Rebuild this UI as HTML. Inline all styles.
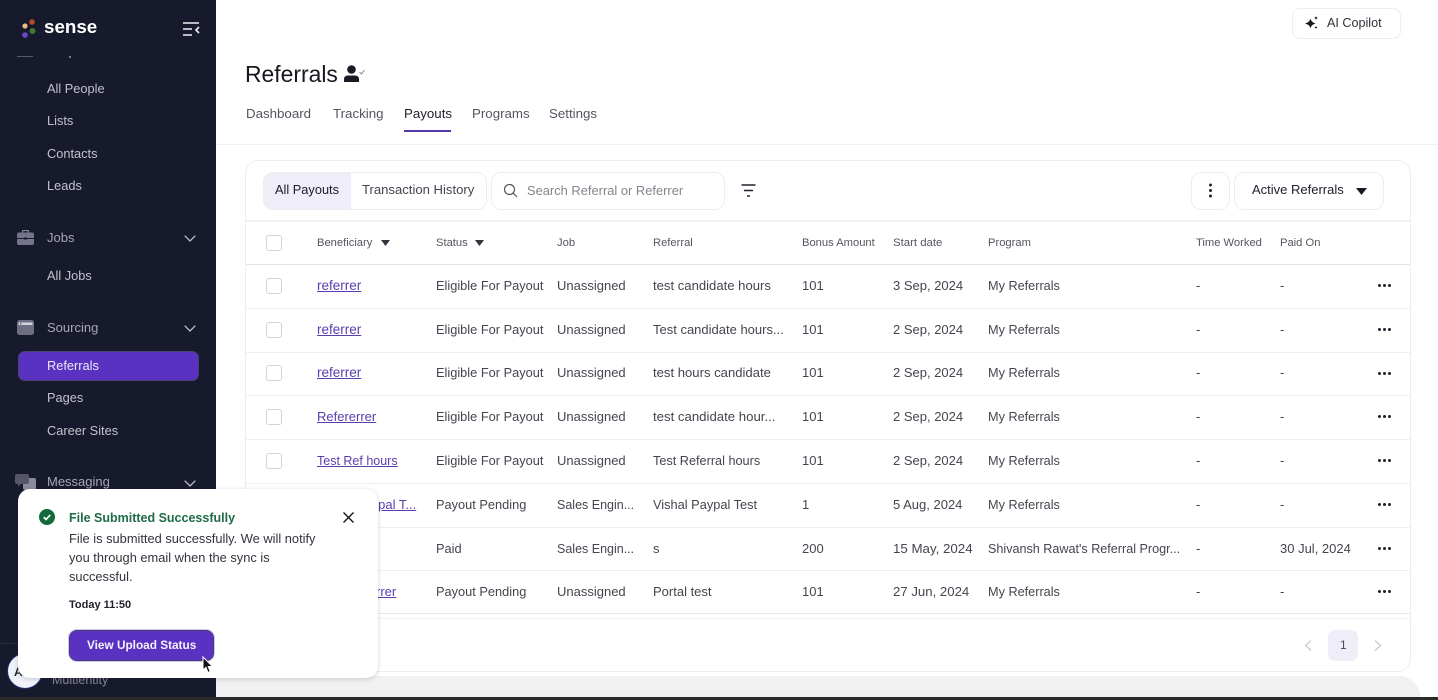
<!DOCTYPE html>
<html lang="en">
<head>
<meta charset="utf-8">
<title>Referrals</title>
<style>
html,body{margin:0;padding:0;background:#fff}
body{width:1438px;height:700px;position:relative;overflow:hidden;font-family:"Liberation Sans",sans-serif;color:#45454f;-webkit-font-smoothing:antialiased}
.t{position:absolute;white-space:nowrap;line-height:20px;height:20px;font-size:13px;margin-top:1px}
.a{position:absolute}
.nav{color:#c2c2cc;font-size:12.800px;left:47px}
.cat{color:#a6a6b4;font-size:13px;left:47px}
.tab{font-size:13.300px;color:#555560;top:103px}
.h{font-size:11.200px;color:#55555f;top:232px}
.l{color:#5a3eae;text-decoration:underline;left:317px}
.s{left:436px;font-size:12.800px}.j{left:557px}.r{left:653px}.b{left:802px}.d{left:893px}.p{left:988px;font-size:12.700px}.w{left:1196px}.o{left:1280px}
.hl{position:absolute;left:246px;width:1164px;height:1px;background:#efeff1}
.cb{position:absolute;left:266px;width:16px;height:16px;box-sizing:border-box;border:1.5px solid #d4d4d8;border-radius:3px;background:#fff}
.dots{position:absolute;left:1378px;width:13px;height:3px}
.dots i{position:absolute;top:0;width:3px;height:3px;background:#22222c;border-radius:50%}
.dots i:nth-child(1){left:0}.dots i:nth-child(2){left:5px}.dots i:nth-child(3){left:10px}
.box{position:absolute;box-sizing:border-box;background:#fff;border:1px solid #eeeef0;border-radius:11px}
</style>
</head>
<body>

<!-- sidebar -->
<div class="a" style="left:0;top:0;width:216px;height:697px;background:#171a2d"></div>
<svg class="a" style="left:20px;top:17px" width="20" height="22" viewBox="0 0 20 22">
<circle cx="5" cy="9" r="2.600" fill="#e9bc7c"/><circle cx="12" cy="5" r="2.800" fill="#b5492a"/><circle cx="12.500" cy="14" r="3" fill="#3f7a34"/><circle cx="5" cy="18" r="2.800" fill="#6a48cc"/>
</svg>
<div class="t" style="left:44px;top:15px;font-size:18.800px;line-height:22px;height:22px;color:#fff;font-weight:700">sense</div>
<svg class="a" style="left:183px;top:22px" width="17" height="14" viewBox="0 0 17 14" fill="none" stroke="#f0f0f4" stroke-width="1.600">
<path d="M0 1H16M0 7H9M0 13H9M16 5L13 8L16 11"/>
</svg>
<div class="a" style="left:17px;top:56px;width:16px;height:1px;background:#55576a"></div>
<div class="a" style="left:69px;top:56px;width:2px;height:2px;background:#77798c"></div>

<div class="t nav" style="top:78px">All People</div>
<div class="t nav" style="top:110px">Lists</div>
<div class="t nav" style="top:143px">Contacts</div>
<div class="t nav" style="top:175px">Leads</div>

<svg class="a" style="left:17px;top:230px" width="17" height="15" viewBox="0 0 17 15">
<path d="M5.500 3V1.500Q5.500 .5 6.500 .5H10.500Q11.500 .5 11.500 1.500V3" fill="none" stroke="#8a8a9c" stroke-width="1.200"/>
<rect y="2.500" width="17" height="12.500" rx="2" fill="#73738a"/><rect y="8" width="17" height="1" fill="#171a2d"/><rect x="7" y="7.500" width="3" height="2" fill="#171a2d"/>
</svg>
<div class="t cat" style="top:227px">Jobs</div>
<svg class="a" style="left:184px;top:235px" width="12" height="7" viewBox="0 0 12 7" fill="none" stroke="#c0c0cc" stroke-width="1.300"><path d="M.7 .7L6 6L11.300 .7"/></svg>
<div class="t nav" style="top:265px">All Jobs</div>

<svg class="a" style="left:17px;top:320px" width="17" height="15" viewBox="0 0 17 15">
<rect width="17" height="15" rx="2.500" fill="#6e6e82"/><rect x="1.500" y="2.500" width="14" height="2.500" fill="#d2d2da"/><rect x="3" y="3" width="1.500" height="1.500" fill="#6e6e82"/>
</svg>
<div class="t cat" style="top:317px">Sourcing</div>
<svg class="a" style="left:184px;top:325px" width="12" height="7" viewBox="0 0 12 7" fill="none" stroke="#c0c0cc" stroke-width="1.300"><path d="M.7 .7L6 6L11.300 .7"/></svg>

<div class="a" style="left:18px;top:351px;width:181px;height:30px;box-sizing:border-box;background:#5932c2;border:1px solid #4d4170;border-radius:7px"></div>
<div class="t" style="left:47px;top:355px;color:#eceaf6;font-size:12.800px">Referrals</div>
<div class="t nav" style="top:387px">Pages</div>
<div class="t nav" style="top:420px">Career Sites</div>

<svg class="a" style="left:15px;top:474px" width="21" height="16" viewBox="0 0 21 16">
<rect x="8" y="4" width="13" height="12" rx="2" fill="#8c8ca0"/><path d="M2 0H12Q14 0 14 2V8Q14 10 12 10H6L3 12.500V10H2Q0 10 0 8V2Q0 0 2 0Z" fill="#55566a"/>
</svg>
<div class="t cat" style="top:471px">Messaging</div>
<svg class="a" style="left:184px;top:480px" width="12" height="7" viewBox="0 0 12 7" fill="none" stroke="#c0c0cc" stroke-width="1.300"><path d="M.7 .7L6 6L11.300 .7"/></svg>

<div class="a" style="left:0;top:643px;width:216px;height:1px;background:#2a2d42"></div>
<div class="a" style="left:7px;top:653px;width:36px;height:36px;box-sizing:border-box;border-radius:50%;background:#f0f2fa;border:1.500px solid #1d2a6c"></div>
<div class="t" style="left:14px;top:661px;font-size:12px;font-weight:700;color:#22222c">A</div>
<div class="t" style="left:52px;top:669px;font-size:12.500px;color:#85859a">Multientity</div>

<!-- top -->
<div class="box" style="left:1292px;top:8px;width:109px;height:31px;border-radius:8px"></div>
<svg class="a" style="left:1305px;top:16px" width="14" height="14" viewBox="0 0 14 14" fill="#1a1a26">
<path d="M5.500 2.500Q6.200 6.300 10.500 7.500Q6.200 8.700 5.500 12.500Q4.800 8.700 0 7.500Q4.800 6.300 5.500 2.500Z"/>
<path d="M11 0Q11.300 1.700 13 2Q11.300 2.300 11 4Q10.700 2.300 9 2Q10.700 1.700 11 0Z"/>
<path d="M11 10Q11.200 11.300 12.500 11.500Q11.200 11.700 11 13Q10.800 11.700 9.500 11.500Q10.800 11.300 11 10Z"/>
</svg>
<div class="t" style="left:1327px;top:12px;font-size:12.600px;color:#30303a">AI Copilot</div>

<div class="t" style="left:245px;top:60px;height:28px;line-height:28px;font-size:22.900px;color:#17171f;margin-top:0">Referrals</div>
<svg class="a" style="left:344px;top:65px" width="21" height="17" viewBox="0 0 21 17">
<circle cx="7.500" cy="4.500" r="4.300" fill="#1a1a26"/><path d="M0 17V14.500Q0 10.500 4 10.500H11Q15 10.500 15 14.500V17Z" fill="#1a1a26"/>
<path d="M15.500 7L17.500 9L20.500 5" fill="none" stroke="#8a8a92" stroke-width="1"/>
</svg>

<div class="t tab" style="left:246px">Dashboard</div>
<div class="t tab" style="left:333px">Tracking</div>
<div class="t tab" style="left:404px;color:#1d1d28">Payouts</div>
<div class="t tab" style="left:472px">Programs</div>
<div class="t tab" style="left:549px">Settings</div>
<div class="a" style="left:404px;top:130px;width:47px;height:1.500px;background:#5438a8"></div>
<div class="a" style="left:216px;top:144px;width:1222px;height:1px;background:#f0f0f2"></div>

<!-- card -->
<div class="box" style="left:245px;top:160px;width:1166px;height:512px;border-radius:14px"></div>

<div class="box" style="left:263px;top:172px;width:224px;height:38px;border-radius:10px"></div>
<div class="a" style="left:264px;top:173px;width:87px;height:36px;background:#efedf8;border-radius:9px 0 0 9px"></div>
<div class="t" style="left:275px;top:179px;font-size:12.800px;color:#20202c">All Payouts</div>
<div class="t" style="left:362px;top:179px;font-size:13.100px;color:#45454f">Transaction History</div>

<div class="box" style="left:491px;top:172px;width:234px;height:38px;border-radius:10px"></div>
<svg class="a" style="left:503px;top:183px" width="15" height="15" viewBox="0 0 15 15" fill="none" stroke="#55555f" stroke-width="1.200"><circle cx="6.500" cy="6.500" r="5"/><path d="M10.200 10.200L14 14"/></svg>
<div class="t" style="left:527px;top:180px;font-size:12.900px;color:#85858e">Search Referral or Referrer</div>

<svg class="a" style="left:741px;top:184px" width="15" height="13" viewBox="0 0 15 13" fill="none" stroke="#22222c" stroke-width="1.500"><path d="M.5 1H14.500M3 6.500H12M6 12H9"/></svg>

<div class="box" style="left:1191px;top:172px;width:39px;height:38px;border-radius:10px"></div>
<svg class="a" style="left:1208px;top:183px" width="5" height="15" viewBox="0 0 5 15" fill="#22222c"><circle cx="2.500" cy="2" r="1.500"/><circle cx="2.500" cy="7.500" r="1.500"/><circle cx="2.500" cy="13" r="1.500"/></svg>
<div class="box" style="left:1234px;top:172px;width:150px;height:38px;border-radius:10px"></div>
<div class="t" style="left:1252px;top:179px;font-size:13px;color:#20202c">Active Referrals</div>
<svg class="a" style="left:1356px;top:188px" width="11" height="7" viewBox="0 0 11 7" fill="#1a1a26"><path d="M0 0H11L5.500 7Z"/></svg>

<!-- table head -->
<div class="a" style="left:246px;top:220px;width:1164px;height:2px;background:#f1f1f3"></div>
<div class="cb" style="top:235px"></div>
<div class="t h" style="left:317px">Beneficiary</div>
<svg class="a" style="left:381px;top:240px" width="9" height="6" viewBox="0 0 9 6" fill="#33333d"><path d="M0 0H9L4.500 6Z"/></svg>
<div class="t h" style="left:436px">Status</div>
<svg class="a" style="left:475px;top:240px" width="9" height="6" viewBox="0 0 9 6" fill="#33333d"><path d="M0 0H9L4.500 6Z"/></svg>
<div class="t h" style="left:557px">Job</div>
<div class="t h" style="left:653px">Referral</div>
<div class="t h" style="left:802px">Bonus Amount</div>
<div class="t h" style="left:893px;font-size:11.400px">Start date</div>
<div class="t h" style="left:988px">Program</div>
<div class="t h" style="left:1196px">Time Worked</div>
<div class="t h" style="left:1280px">Paid On</div>
<div class="a" style="left:246px;top:264px;width:1164px;height:1px;background:#e4e4e7"></div>

<!-- row 1 -->
<div class="cb" style="top:278px"></div>
<div class="t l" style="top:275px;font-size:13.500px">referrer</div><div class="t s" style="top:275px">Eligible For Payout</div><div class="t j" style="top:275px">Unassigned</div><div class="t r" style="top:275px;font-size:13.100px">test candidate hours</div><div class="t b" style="top:275px">101</div><div class="t d" style="top:275px">3 Sep, 2024</div><div class="t p" style="top:275px">My Referrals</div><div class="t w" style="top:275px">-</div><div class="t o" style="top:275px">-</div>
<div class="dots" style="top:284px"><i></i><i></i><i></i></div>
<div class="hl" style="top:308px"></div>

<!-- row 2 -->
<div class="cb" style="top:322px"></div>
<div class="t l" style="top:319px;font-size:13.500px">referrer</div><div class="t s" style="top:319px">Eligible For Payout</div><div class="t j" style="top:319px">Unassigned</div><div class="t r" style="top:319px">Test candidate hours...</div><div class="t b" style="top:319px">101</div><div class="t d" style="top:319px">2 Sep, 2024</div><div class="t p" style="top:319px">My Referrals</div><div class="t w" style="top:319px">-</div><div class="t o" style="top:319px">-</div>
<div class="dots" style="top:328px"><i></i><i></i><i></i></div>
<div class="hl" style="top:352px"></div>

<!-- row 3 -->
<div class="cb" style="top:365px"></div>
<div class="t l" style="top:362px;font-size:13.500px">referrer</div><div class="t s" style="top:362px">Eligible For Payout</div><div class="t j" style="top:362px">Unassigned</div><div class="t r" style="top:362px;font-size:13.100px">test hours candidate</div><div class="t b" style="top:362px">101</div><div class="t d" style="top:362px">2 Sep, 2024</div><div class="t p" style="top:362px">My Referrals</div><div class="t w" style="top:362px">-</div><div class="t o" style="top:362px">-</div>
<div class="dots" style="top:372px"><i></i><i></i><i></i></div>
<div class="hl" style="top:395px"></div>

<!-- row 4 -->
<div class="cb" style="top:409px"></div>
<div class="t l" style="top:406px">Refererrer</div><div class="t s" style="top:406px">Eligible For Payout</div><div class="t j" style="top:406px">Unassigned</div><div class="t r" style="top:406px;font-size:13.200px">test candidate hour...</div><div class="t b" style="top:406px">101</div><div class="t d" style="top:406px">2 Sep, 2024</div><div class="t p" style="top:406px">My Referrals</div><div class="t w" style="top:406px">-</div><div class="t o" style="top:406px">-</div>
<div class="dots" style="top:415px"><i></i><i></i><i></i></div>
<div class="hl" style="top:439px"></div>

<!-- row 5 -->
<div class="cb" style="top:453px"></div>
<div class="t l" style="top:450px;font-size:12.500px">Test Ref hours</div><div class="t s" style="top:450px">Eligible For Payout</div><div class="t j" style="top:450px">Unassigned</div><div class="t r" style="top:450px;font-size:12.700px">Test Referral hours</div><div class="t b" style="top:450px">101</div><div class="t d" style="top:450px">2 Sep, 2024</div><div class="t p" style="top:450px">My Referrals</div><div class="t w" style="top:450px">-</div><div class="t o" style="top:450px">-</div>
<div class="dots" style="top:459px"><i></i><i></i><i></i></div>
<div class="hl" style="top:483px"></div>

<!-- row 6 -->
<div class="t l" style="top:494px">Vishal Paypal T...</div><div class="t s" style="top:494px">Payout Pending</div><div class="t j" style="top:494px;font-size:12.500px">Sales Engin...</div><div class="t r" style="top:494px;font-size:12.800px">Vishal Paypal Test</div><div class="t b" style="top:494px">1</div><div class="t d" style="top:494px">5 Aug, 2024</div><div class="t p" style="top:494px">My Referrals</div><div class="t w" style="top:494px">-</div><div class="t o" style="top:494px">-</div>
<div class="dots" style="top:503px"><i></i><i></i><i></i></div>
<div class="hl" style="top:527px"></div>

<!-- row 7 -->
<div class="t s" style="top:538px">Paid</div><div class="t j" style="top:538px;font-size:12.500px">Sales Engin...</div><div class="t r" style="top:538px">s</div><div class="t b" style="top:538px">200</div><div class="t d" style="top:538px;font-size:13.300px">15 May, 2024</div><div class="t p" style="top:538px;font-size:12.600px">Shivansh Rawat's Referral Progr...</div><div class="t w" style="top:538px">-</div><div class="t o" style="top:538px">30 Jul, 2024</div>
<div class="dots" style="top:547px"><i></i><i></i><i></i></div>
<div class="hl" style="top:570px"></div>

<!-- row 8 -->
<div class="t l" style="top:581px;left:376px">rrer</div><div class="t s" style="top:581px">Payout Pending</div><div class="t j" style="top:581px">Unassigned</div><div class="t r" style="top:581px">Portal test</div><div class="t b" style="top:581px">101</div><div class="t d" style="top:581px;font-size:13.200px">27 Jun, 2024</div><div class="t p" style="top:581px">My Referrals</div><div class="t w" style="top:581px">-</div><div class="t o" style="top:581px">-</div>
<div class="dots" style="top:590px"><i></i><i></i><i></i></div>
<div class="a" style="left:246px;top:613px;width:1164px;height:1px;background:#e8e8ea"></div>
<div class="a" style="left:246px;top:618px;width:1164px;height:1px;background:#f1f1f3"></div>

<!-- pagination -->
<svg class="a" style="left:1304px;top:640px" width="8" height="11" viewBox="0 0 8 11" fill="none" stroke="#bdbdc4" stroke-width="1"><path d="M7 .5L1.500 5.500L7 10.500"/></svg>
<div class="a" style="left:1328px;top:630px;width:30px;height:31px;background:#efedf8;border-radius:7px"></div>
<div class="t" style="left:1340px;top:634px;font-size:12px;color:#4a4a58">1</div>
<svg class="a" style="left:1374px;top:640px" width="8" height="11" viewBox="0 0 8 11" fill="none" stroke="#bdbdc4" stroke-width="1"><path d="M1 .5L6.500 5.500L1 10.500"/></svg>

<!-- bottom band -->
<div class="a" style="left:216px;top:676px;width:1204px;height:21px;background:#f1f1f2;border-radius:0 30px 0 0"></div>
<div class="a" style="left:0;top:697px;width:1438px;height:3px;background:#2b2a28"></div>

<!-- toast -->
<div class="a" style="left:18px;top:489px;width:360px;height:189px;background:#fff;border-radius:12px;box-shadow:0 1px 5px rgba(30,30,50,.2)"></div>
<svg class="a" style="left:39px;top:509px" width="16" height="16" viewBox="0 0 16 16"><circle cx="8" cy="8" r="8" fill="#11693c"/><path d="M4.700 8.200L7 10.400L11.300 5.900" fill="none" stroke="#fff" stroke-width="1.700"/></svg>
<div class="t" style="left:69px;top:507px;font-size:12.500px;font-weight:700;color:#1f6b47">File Submitted Successfully</div>
<svg class="a" style="left:343px;top:512px" width="11" height="11" viewBox="0 0 11 11" fill="none" stroke="#15151d" stroke-width="1.400"><path d="M.5 .5L10.500 10.500M10.500 .5L.5 10.500"/></svg>
<div class="t" style="left:69px;top:528px;color:#33333d;font-size:12.850px">File is submitted successfully. We will notify</div>
<div class="t" style="left:69px;top:547px;color:#33333d;font-size:12.850px">you through email when the sync is</div>
<div class="t" style="left:69px;top:566px;color:#33333d;font-size:12.850px">successful.</div>
<div class="t" style="left:69px;top:594px;font-size:11px;font-weight:700;color:#22222c">Today 11:50</div>
<div class="a" style="left:69px;top:630px;width:145px;height:31px;box-sizing:border-box;background:#5932c2;border-radius:8px;border:1px solid #4a3a78;box-shadow:0 0 0 1px #cfc6ee"></div>
<div class="t" style="left:87px;top:634px;font-size:11.800px;font-weight:700;color:#f4f2fb">View Upload Status</div>
<svg class="a" style="left:202px;top:656px" width="12" height="18" viewBox="0 0 12 18"><path d="M1 1V14L4 11.300L6 16.500L8.200 15.500L6.200 10.500H10.500Z" fill="#111" stroke="#fff" stroke-width="1"/></svg>

</body>
</html>
